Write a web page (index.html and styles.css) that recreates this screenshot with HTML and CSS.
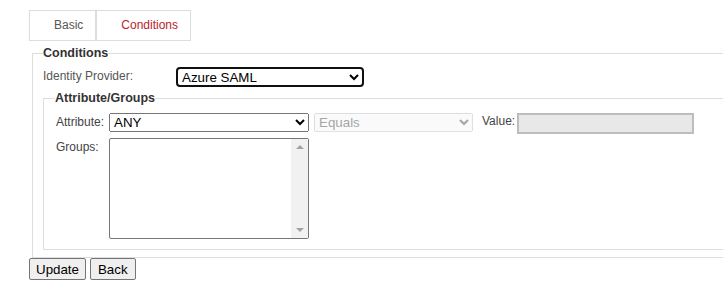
FILE: index.html
```html
<!DOCTYPE html>
<html>
<head>
<meta charset="utf-8">
<link rel="stylesheet" href="styles.css">
</head>
<body>
<div class="page">
  <ul class="tabs">
    <li class="tab">Basic</li>
    <li class="tab active">Conditions</li>
  </ul>
  <fieldset class="outer">
    <legend>Conditions</legend>
    <div class="row idp-row">
      <label class="lbl idp-lbl">Identity Provider:</label>
      <select class="sel idp-sel"><option>Azure SAML</option></select>
    </div>
    <fieldset class="inner">
      <legend>Attribute/Groups</legend>
      <div class="row attr-row">
        <label class="lbl attr-lbl">Attribute:</label>
        <select class="sel attr-sel"><option>ANY</option></select>
        <select class="sel op-sel" disabled><option>Equals</option></select>
        <label class="lbl val-lbl">Value:</label>
        <input class="val-input" type="text" disabled>
      </div>
      <div class="row groups-row">
        <label class="lbl attr-lbl">Groups:</label>
        <div class="listbox">
          <div class="scroll">
            <span class="arrow up"></span>
            <span class="arrow down"></span>
          </div>
        </div>
      </div>
    </fieldset>
  </fieldset>
  <div class="buttons">
    <button class="btn" type="button">Update</button>
    <button class="btn btn-back" type="button">Back</button>
  </div>
</div>
</body>
</html>
```
FILE: styles.css
```css
html, body {
  margin: 0;
  padding: 0;
  overflow: hidden;
  background: #fff;
}
body {
  font-family: "Liberation Sans", Arial, sans-serif;
  font-size: 12px;
  color: #333;
}
.page {
  padding: 10px 0 0 29px;
}
.tabs {
  list-style: none;
  margin: 0;
  padding: 0;
  display: flex;
}
.tab {
  border: 1px solid #ddd;
  height: 29px;
  line-height: 29px;
  padding: 0 12px 0 24px;
  color: #555;
  font-size: 12px;
}
.tab.active {
  color: #b8232b;
}
fieldset {
  border: 1px solid #ddd;
  border-right: 0;
  margin: 0;
  min-width: 0;
}
legend {
  padding: 0;
  font-weight: bold;
  font-size: 12.5px;
  line-height: 14px;
  color: #333;
}
.outer {
  margin: 5px 0 0 3px;
  padding: 0 0 7px 10px;
}
.row {
  display: flex;
  align-items: flex-start;
}
.lbl {
  color: #444;
  font-size: 12px;
}
.idp-row {
  margin-top: 7px;
}
.idp-lbl {
  width: 133px;
  padding-top: 2px;
  color: #555;
}
.sel {
  font-family: "Liberation Sans", Arial, sans-serif;
  font-size: 13.33px;
  margin: 0;
  box-sizing: border-box;
}
.idp-sel {
  width: 188px;
  height: 20px;
  border: 2px solid #101010;
  border-radius: 4px;
  outline: none;
  color: #000;
  background: #fff;
}
.inner {
  margin: 4px 0 0 0;
  padding: 0 0 10px 11px;
}
.attr-row {
  margin-top: 8px;
}
.attr-lbl {
  padding-left: 1px;
  padding-top: 2px;
  box-sizing: border-box;
  width: 54px;
}
.attr-sel {
  width: 200px;
  height: 19px;
  color: #000;
}
.op-sel {
  width: 159px;
  height: 19px;
  margin-left: 5px;
}
.val-lbl {
  margin-left: 9px;
  width: 35px;
  padding-top: 1px;
}
.val-input {
  margin: 0;
  width: 177px;
  height: 21px;
  box-sizing: border-box;
  border: 2px solid #bdbdbd;
  background: #e8e8e8;
}
.groups-row {
  margin-top: 4px;
}
.listbox {
  width: 200px;
  height: 101px;
  box-sizing: border-box;
  border: 1px solid #767676;
  border-radius: 2px;
  display: flex;
  justify-content: flex-end;
  background: #fff;
}
.scroll {
  width: 17px;
  height: 100%;
  background: #f1f1f1;
  position: relative;
}
.arrow {
  position: absolute;
  left: 5px;
  width: 0;
  height: 0;
  border-left: 4px solid transparent;
  border-right: 4px solid transparent;
}
.arrow.up {
  top: 6px;
  border-bottom: 4px solid #a3a3a3;
}
.arrow.down {
  bottom: 6px;
  border-top: 4px solid #a3a3a3;
}
.buttons {
  display: flex;
  gap: 4px;
}
.btn {
  font-family: "Liberation Sans", Arial, sans-serif;
  font-size: 13.33px;
  margin: 0;
  padding: 1px 6px;
  height: 22px;
  background: #efefef;
  border: 1px solid #767676;
  border-radius: 2px;
  color: #000;
}
.btn-back {
  padding: 1px 7px;
}
```
